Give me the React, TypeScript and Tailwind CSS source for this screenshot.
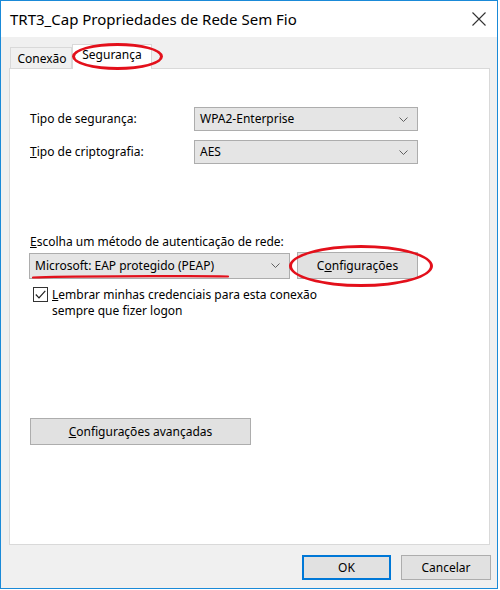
import React from "react";

const Chevron = () => (
  <svg width="9" height="5" viewBox="0 0 9 5" className="shrink-0">
    <path d="M0.5 0.5 L4.5 4.5 L8.5 0.5" fill="none" stroke="#606060" strokeWidth="1" />
  </svg>
);

function Select({ value, className }: { value: string; className?: string }) {
  return (
    <div
      className={
        "flex items-center justify-between bg-[#e5e5e5] border border-[#adadad] pl-[5px] pr-[9px] text-[#000] " +
        (className ?? "")
      }
    >
      <span>{value}</span>
      <Chevron />
    </div>
  );
}

export default function App() {
  return (
    <div
      className="w-[500px] h-[590px] bg-white text-[12px] leading-[16px] text-black"
      style={{ fontFamily: '"Noto Sans", "Open Sans", sans-serif' }}
    >
      <div className="w-[498px] h-[589px] border border-[#1a8ad8] flex flex-col">
        {/* title bar */}
        <div className="h-[36px] bg-white flex items-center justify-between pl-[9px] pr-[11px]">
          <span className="text-[15px] text-black">TRT3_Cap Propriedades de Rede Sem Fio</span>
          <svg width="14" height="14" viewBox="0 0 14 14">
            <path d="M0.5 0.5 L13.5 13.5 M13.5 0.5 L0.5 13.5" stroke="#333" strokeWidth="1.1" />
          </svg>
        </div>
        {/* body */}
        <div className="flex-1 bg-[#f0f0f0] flex flex-col">
          <div className="pl-[8px] pt-[7px] flex flex-col">
            {/* tabs */}
            <div className="flex items-end h-[24px] relative z-10 pl-[1px]">
              <div className="h-[21px] w-[62px] border border-b-0 border-[#d9d9d9] bg-[#f0f0f0] flex items-center justify-center pt-[2px] pl-[2px]">
                Conexão
              </div>
              <div className="h-[25px] -mb-[1px] w-[80px] border border-b-0 border-[#d9d9d9] bg-white flex items-start justify-center pt-[2px] relative">
                Segurança
                <div className="absolute left-[-1px] top-[-2px] w-[91px] h-[27px] border-[3px] border-[#e3101b] rounded-[50%]" />
              </div>
            </div>
            {/* panel */}
            <div className="w-[481px] h-[477px] bg-white border border-[#d9d9d9] flex flex-col pl-[20px]">
              <div className="mt-[38px] grid grid-cols-[164px_224px] gap-y-[9px] items-center">
                <span>Tipo de segurança:</span>
                <Select value="WPA2-Enterprise" className="h-[24px]" />
                <span>
                  <span className="underline">T</span>ipo de criptografia:
                </span>
                <Select value="AES" className="h-[24px]" />
              </div>
              <div className="mt-[70px]">
                <span className="underline">E</span>scolha um método de autenticação de rede:
              </div>
              <div className="mt-[2px] flex items-center -ml-[1px]">
                <div className="relative">
                  <Select value="Microsoft: EAP protegido (PEAP)" className="h-[26px] w-[261px]" />
                  <svg
                    className="absolute left-[3px] top-[19px]"
                    width="200"
                    height="8"
                    viewBox="0 0 200 8"
                  >
                    <path d="M1 5.5 C 30 4, 80 4.5, 120 4.2 S 180 4, 196 4.5" fill="none" stroke="#e3101b" strokeWidth="2.2" strokeLinecap="round" />
                  </svg>
                </div>
                <div className="relative ml-[7px]">
                  <div className="h-[27px] w-[121px] bg-[#e1e1e1] border border-[#adadad] flex items-center justify-center">
                    C<span className="underline">o</span>nfigurações
                  </div>
                  <div className="absolute left-[-8px] top-[-7px] w-[144px] h-[42px] border-[3px] border-[#e3101b] rounded-[50%]" />
                </div>
              </div>
              <div className="mt-[8px] flex items-start ml-[3px]">
                <div className="w-[15px] h-[15px] border border-[#333] bg-white flex items-center justify-center shrink-0">
                  <svg width="11" height="9" viewBox="0 0 11 9">
                    <path d="M0.8 4.5 L4 7.8 L10.3 0.8" fill="none" stroke="#222" strokeWidth="1.2" />
                  </svg>
                </div>
                <div className="ml-[4px] leading-[16px]">
                  <div>
                    <span className="underline">L</span>embrar minhas credenciais para esta conexão
                  </div>
                  <div>sempre que fizer logon</div>
                </div>
              </div>
              <div className="mt-[99px] h-[27px] w-[221px] bg-[#e1e1e1] border border-[#adadad] flex items-center justify-center">
                <span className="underline">C</span>onfigurações avançadas
              </div>
            </div>
          </div>
          {/* buttons */}
          <div className="flex justify-end gap-[10px] pr-[6px] mt-[10px]">
            <div className="h-[25px] w-[89px] bg-[#e1e1e1] border-2 border-[#0078d7] flex items-center justify-center">
              OK
            </div>
            <div className="h-[25px] w-[90px] bg-[#e1e1e1] border border-[#adadad] flex items-center justify-center">
              Cancelar
            </div>
          </div>
        </div>
      </div>
    </div>
  );
}
